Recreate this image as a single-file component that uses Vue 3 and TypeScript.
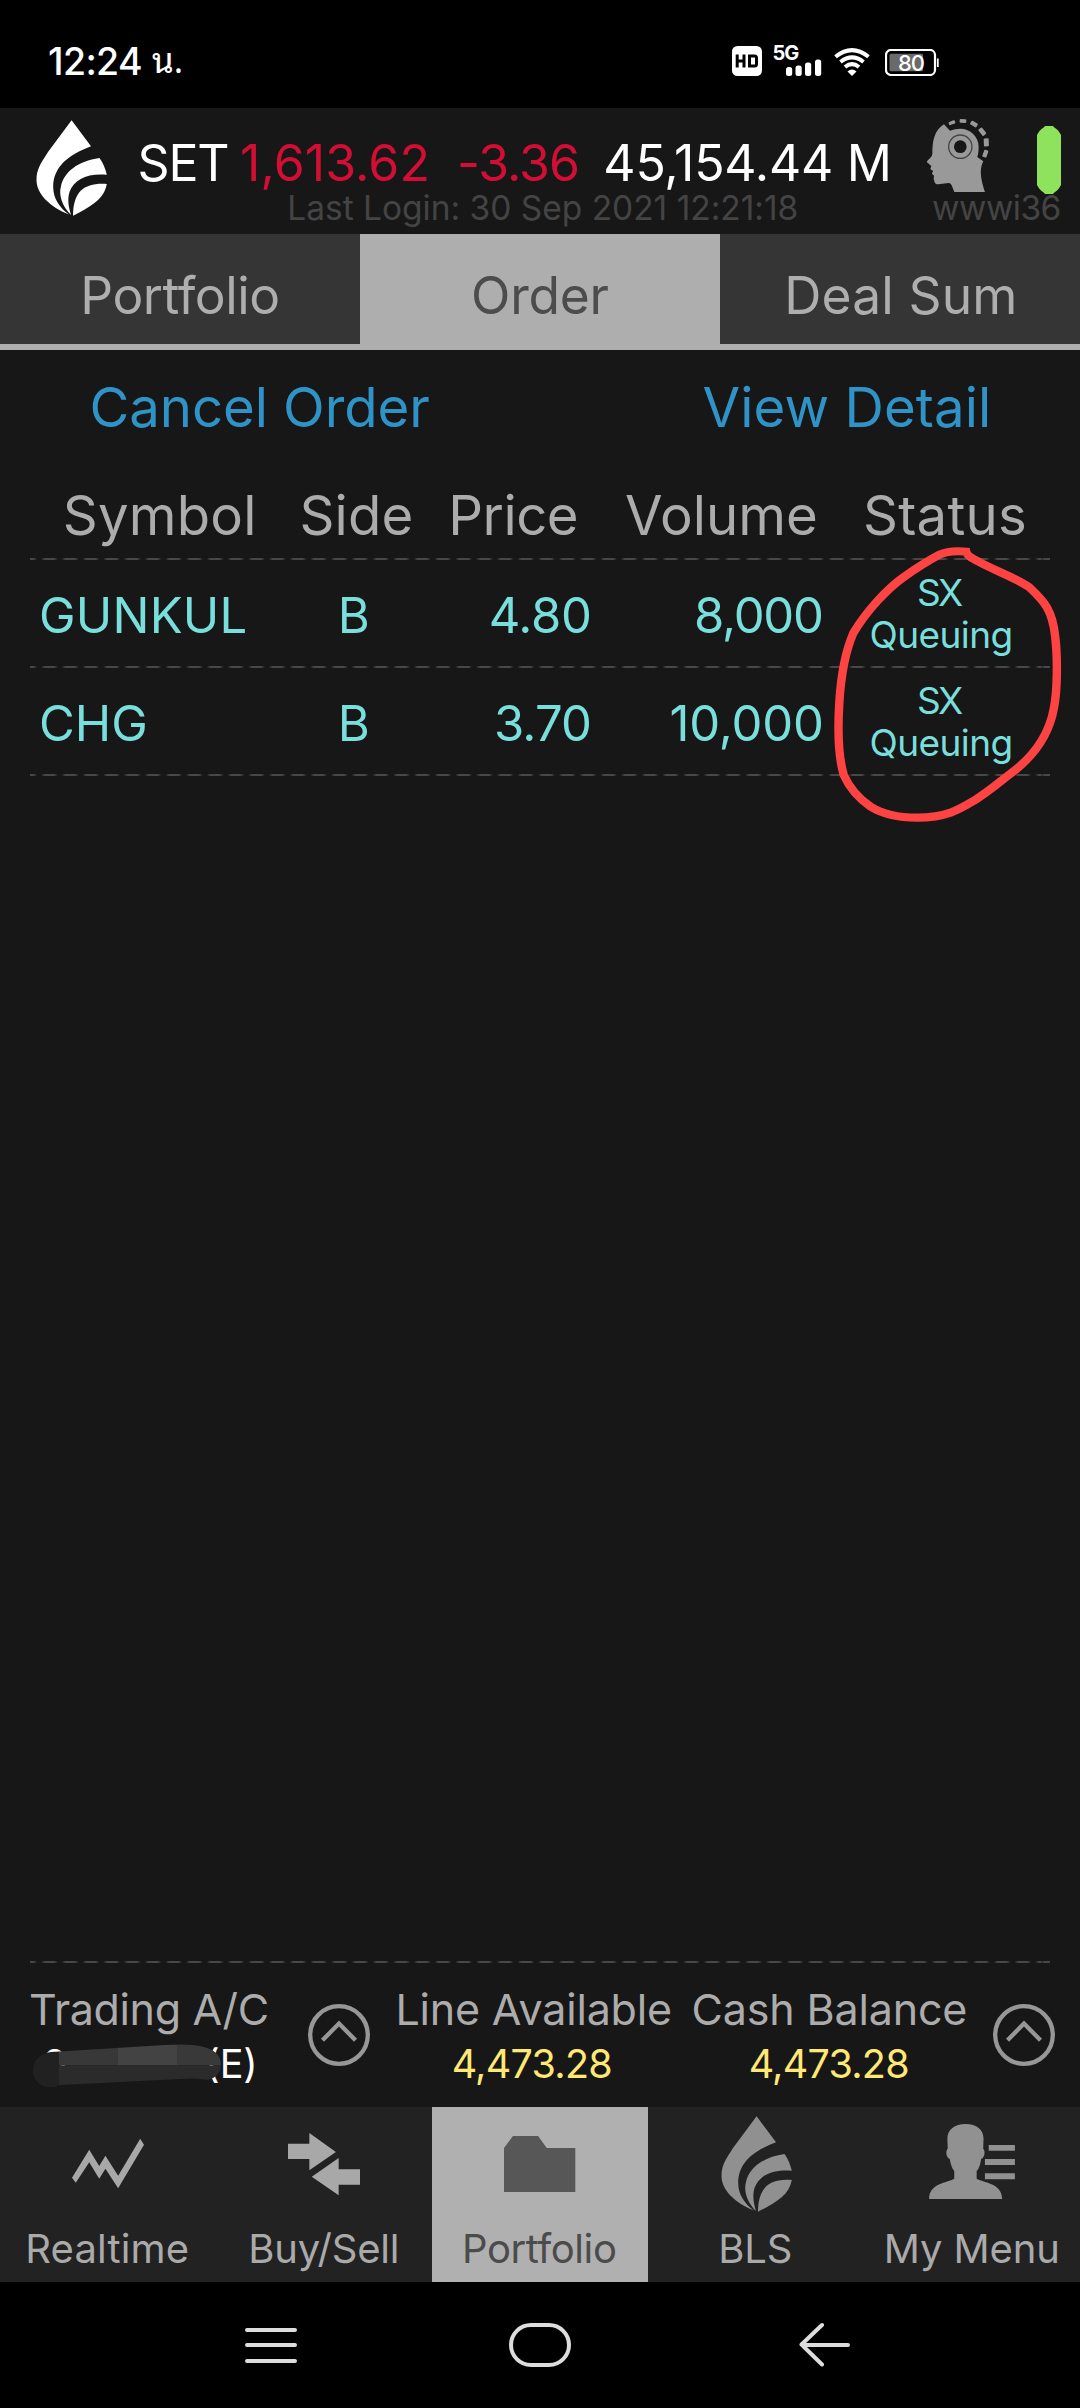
<script setup lang="ts">
import type { Directive } from 'vue'

interface Order {
  symbol: string
  symbolWidth: number
  side: string
  price: string
  priceWidth: number
  volume: string
  volumeWidth: number
}

const orders: Order[] = [
  { symbol: 'GUNKUL', symbolWidth: 204.5, side: 'B', price: '4.80', priceWidth: 98.3, volume: '8,000', volumeWidth: 125 },
  { symbol: 'CHG', symbolWidth: 104.3, side: 'B', price: '3.70', priceWidth: 93, volume: '10,000', volumeWidth: 149.5 },
]

// Tracks a label so that its visible glyphs span exactly the given width.
const vSpan: Directive<HTMLElement, number> = {
  mounted(el, { value }) {
    const text = (el.textContent ?? '').trim()
    const ctx = document.createElement('canvas').getContext('2d')
    if (!ctx) return
    const cs = getComputedStyle(el)
    ctx.font = `${cs.fontWeight} ${cs.fontSize} ${cs.fontFamily}`
    const m = ctx.measureText(text)
    const natural = m.actualBoundingBoxLeft + m.actualBoundingBoxRight
    const gaps = Math.max(text.length - 1, 1)
    const spacing = text.length > 1 ? (value - natural) / gaps : 0
    el.style.width = `${value}px`
    el.style.textIndent = `${m.actualBoundingBoxLeft}px`
    el.style.letterSpacing = `${spacing.toFixed(3)}px`
  },
}
</script>

<template>
  <div class="screen">
    <div class="status">
      <div class="clock"><span v-span="92" class="t">12:24</span><span class="thai">น.</span></div>
      <div class="tray">
        <svg class="hd" width="30" height="30" viewBox="0 0 30 30">
          <rect width="30" height="30" rx="5.5" fill="#fff" />
          <path d="M5.2 8.5V21.500M5.200 15H12M12 8.500V21.500M17.500 10H22.500Q24.500 10 24.500 12V18Q24.500 20 22.500 20H17.500Z" fill="none" stroke="#000" stroke-width="3" />
        </svg>
        <div class="signal">
          <span class="five">5G</span>
          <svg width="48" height="30" viewBox="0 0 48 30">
            <g fill="#fff">
              <rect x="12" y="21" width="6.200" height="9" rx="2.500" />
              <rect x="21.500" y="19.500" width="6.200" height="10.500" rx="2.500" />
              <rect x="31" y="16.500" width="6.200" height="13.500" rx="2.500" />
              <rect x="41" y="13.500" width="6.200" height="16.500" rx="2.500" />
            </g>
          </svg>
        </div>
        <svg class="wifi" width="36" height="28" viewBox="0 0 36 28">
          <g fill="none" stroke="#fff" stroke-width="4">
            <path d="M1.500 8.800Q18 -4.500 34.500 8.800" />
            <path d="M6.500 14Q18 4.800 29.500 14" />
            <path d="M11 19Q18 13.200 25 19" />
          </g>
          <path d="M13.500 23.500Q18 19.500 22.500 23.500L18 28Z" fill="#fff" />
        </svg>
        <div class="battery">
          <svg width="54" height="27" viewBox="0 0 54 27">
            <rect x="1" y="1" width="49" height="25" rx="5" fill="none" stroke="#fff" stroke-width="2.200" />
            <rect x="4.500" y="4.800" width="33.500" height="17.500" rx="1.500" fill="#6a6a6a" />
            <path d="M52.800 9.500V18" stroke="#fff" stroke-width="1.800" />
          </svg>
          <span class="pct">80</span>
        </div>
      </div>
    </div>

    <header class="top">
      <svg class="drop" width="72" height="96" viewBox="0 0 72 96" fill="#fff">
        <path d="M35.600 .3L55 26.300C32 35 17.200 47 17.200 67C17.200 79 24 88 33 94.500C14 87 .5 74 .5 60C.5 49 5 43 12 32Z" />
        <path d="M63.500 38Q68.500 45 70.800 54.700C52 53 38 59 33.500 72C31 80 33 88 35 95C26 86 22.500 75 25 66C28 52 42 41 63.500 38Z" />
        <path d="M70.800 64C50 62.500 37 70 37 95.700C56 86 68 79 70.800 64Z" />
      </svg>
      <div class="quote">
        <div class="index">
          <span v-span="87.800" class="t">SET</span>
          <span v-span="184.400" class="t red a">1,613.62</span>
          <span v-span="118" class="t red b">-3.36</span>
          <span v-span="282.500" class="t c">45,154.44 M</span>
        </div>
        <span v-span="507.300" class="t login">Last Login: 30 Sep 2021 12:21:18</span>
      </div>
      <div class="user">
        <div class="usericons">
          <svg width="63.300" height="74" viewBox="80 33 190 222">
            <g fill="#999">
              <path d="M134 49L152 68C162 64 172 62 183 62C213 62 238 86 238 116C238 128 237 138 234 147L252 160C245 175 238 195 257 252H165C160 240 157 225 148 225L116 229C105 229 106 221 103 213L104 203L98 197L101 188L93 184L96 174L83 163C81 157 98 150 99 138C99 100 104 68 134 49Z" />
              <rect x="-10" y="-5" width="20" height="10" rx="3" transform="translate(158 44) rotate(-20)" />
              <rect x="-10" y="-5.500" width="20" height="11" rx="3" transform="translate(191 39) rotate(4)" />
              <rect x="-11" y="-6.500" width="22" height="13" rx="3" transform="translate(224 48) rotate(30)" />
              <rect x="-12" y="-7" width="24" height="14" rx="3" transform="translate(249 71) rotate(52)" />
              <rect x="-12" y="-7.500" width="24" height="15" rx="3" transform="translate(261 103) rotate(88)" />
              <rect x="-11" y="-6.500" width="22" height="13" rx="3" transform="translate(258 137) rotate(110)" />
            </g>
            <circle cx="183" cy="116" r="35" fill="none" stroke="#444" stroke-width="4" />
            <circle cx="183" cy="116" r="19" fill="#171717" />
          </svg>
          <svg class="pill" width="24" height="68" viewBox="0 0 24 68"><path d="M8 0H16L24 9V59L16 68H8L0 59V9Z" fill="#8ee25c" /><rect y="1" width="24" height="66" rx="11" fill="#8ee25c" /></svg>
        </div>
        <span v-span="126.500" class="t login">wwwi36</span>
      </div>
    </header>

    <nav class="tabs">
      <div class="tab"><span v-span="194" class="t">Portfolio</span></div>
      <div class="tab on"><span v-span="134.300" class="t">Order</span></div>
      <div class="tab"><span v-span="226" class="t">Deal Sum</span></div>
    </nav>

    <div class="actions">
      <span v-span="336.700" class="t">Cancel Order</span>
      <span v-span="283.400" class="t">View Detail</span>
    </div>

    <main class="table">
      <div class="row head">
        <div class="cell"><span v-span="186.300" class="t">Symbol</span></div>
        <div class="cell"><span v-span="109.200" class="t">Side</span></div>
        <div class="cell"><span v-span="124.600" class="t">Price</span></div>
        <div class="cell"><span v-span="190" class="t">Volume</span></div>
        <div class="cell"><span v-span="159.100" class="t">Status</span></div>
      </div>
      <div class="dash" />
      <template v-for="o in orders" :key="o.symbol">
        <div class="row">
          <div class="cell sym"><span v-span="o.symbolWidth" class="t">{{ o.symbol }}</span></div>
          <div class="cell side"><span v-span="27.600" class="t">{{ o.side }}</span></div>
          <div class="cell price"><span v-span="o.priceWidth" class="t">{{ o.price }}</span></div>
          <div class="cell vol"><span v-span="o.volumeWidth" class="t">{{ o.volume }}</span></div>
          <div class="cell state">
            <span v-span="43.800" class="t">SX</span>
            <span v-span="139" class="t">Queuing</span>
          </div>
        </div>
        <div class="dash" />
      </template>
    </main>

    <svg class="mark" width="540" height="380" viewBox="0 0 1568 1140" preserveAspectRatio="none">
      <path d="M1247 276C1215 272 1180 274 1160 284C1120 306 1085 330 1055 352C1010 385 950 450 910 519C884 580 873 660 869 730C865 800 866 890 882 945C899 985 925 1015 960 1040C1000 1066 1045 1073 1095 1073C1180 1072 1215 1050 1260 1022C1300 997 1335 965 1380 930C1440 880 1480 815 1492 745C1503 690 1503 590 1496 530C1488 450 1465 425 1422 383C1390 357 1320 332 1270 303C1250 292 1236 285 1236 268" fill="none" stroke="#fe4343" stroke-width="24.500" stroke-linejoin="round" />
    </svg>

    <section class="account">
      <div class="dash" />
      <div class="accrow">
        <div class="acc one">
          <span v-span="236.700" class="t lab">Trading A/C</span>
          <div class="masked">
            <span v-span="20" class="t val">0</span>
            <span v-span="45" class="t val">(E)</span>
            <svg class="smear" width="188" height="44" viewBox="33 2043.500 188 44">
              <defs>
                <clipPath id="smear"><path d="M51 2051.500L165 2044.500Q190 2043 200 2045.500C214 2048 221 2055 221 2064C221 2075 212 2080 204 2079Q196 2077.500 180 2078.500L60 2084.500Q55 2087 49 2087C39 2086 33 2079 33 2070C33 2060 40 2052.500 51 2051.500Z" /></clipPath>
              </defs>
              <g clip-path="url(#smear)">
                <rect x="33" y="2043" width="26" height="45" fill="#212121" />
                <rect x="59" y="2043" width="59" height="22" fill="#383838" />
                <rect x="118" y="2043" width="59" height="22" fill="#434343" />
                <rect x="177" y="2043" width="45" height="22" fill="#393939" />
                <rect x="59" y="2065" width="163" height="24" fill="#2b2b2b" />
              </g>
            </svg>
          </div>
        </div>
        <svg class="up" width="62" height="62" viewBox="0 0 62 62" fill="none" stroke="#979797"><circle cx="31" cy="31" r="28.800" stroke-width="4.300" /><path d="M14.500 36.300L31 19.500L47.500 36.300" stroke-width="4.300" /></svg>
        <div class="acc two">
          <span v-span="271.500" class="t lab">Line Available</span>
          <span v-span="157.700" class="t val yel">4,473.28</span>
        </div>
        <div class="acc three">
          <span v-span="271.700" class="t lab">Cash Balance</span>
          <span v-span="157.500" class="t val yel">4,473.28</span>
        </div>
        <svg class="up last" width="62" height="62" viewBox="0 0 62 62" fill="none" stroke="#979797"><circle cx="31" cy="31" r="28.800" stroke-width="4.300" /><path d="M14.500 36.300L31 19.500L47.500 36.300" stroke-width="4.300" /></svg>
      </div>
    </section>

    <nav class="bottom">
      <div class="item">
        <div class="ico"><svg width="216" height="112" viewBox="0 0 627 336" preserveAspectRatio="none"><path fill="#a8a8a8" d="M209 212L259 128L288 177L306 146L343 206L407 95L418 113L343 244L306 185L288 215L259 166L220 227Z" /></svg></div>
        <span v-span="159.400" class="t">Realtime</span>
      </div>
      <div class="item">
        <div class="ico"><svg width="216" height="112" viewBox="627 0 627 336" preserveAspectRatio="none"><path fill="#a8a8a8" d="M836 110H898V78L975 135L898 190V156H836ZM1045 187H983V153L905 209L983 265V233H1045Z" /></svg></div>
        <span v-span="145.300" class="t">Buy/Sell</span>
      </div>
      <div class="item on">
        <div class="ico"><svg width="216" height="112" viewBox="1254 0 627 336" preserveAspectRatio="none"><path fill="#575757" d="M1463 123L1489 87H1562L1587 123H1670V255H1463Z" /></svg></div>
        <span v-span="149.800" class="t">Portfolio</span>
      </div>
      <div class="item">
        <div class="ico">
          <svg class="bls" width="72" height="96" viewBox="0 0 72 96" fill="#909090">
            <path d="M35.600 .3L55 26.300C32 35 17.200 47 17.200 67C17.200 79 24 88 33 94.500C14 87 .5 74 .5 60C.5 49 5 43 12 32Z" />
            <path d="M63.500 38Q68.500 45 70.800 54.700C52 53 38 59 33.500 72C31 80 33 88 35 95C26 86 22.500 75 25 66C28 52 42 41 63.500 38Z" />
            <path d="M70.800 64C50 62.500 37 70 37 95.700C56 86 68 79 70.800 64Z" />
          </svg>
        </div>
        <span v-span="69.600" class="t">BLS</span>
      </div>
      <div class="item">
        <div class="ico"><svg width="216" height="112" viewBox="941 0 627 336" preserveAspectRatio="none"><path fill="#919191" d="M1236 51C1268 51 1288 68 1288 95L1287 125C1293 130 1293 150 1281 156C1279 172 1275 185 1268 192V215C1290 228 1342 228 1342 276H1130C1130 228 1182 228 1203 215V192C1197 185 1192 172 1190 156C1178 150 1178 130 1184 125L1183 95C1183 68 1204 51 1236 51ZM1303 114H1379V131H1303ZM1292 156H1379V174H1292ZM1292 199H1379V217H1292Z" /></svg></div>
        <span v-span="170.500" class="t">My Menu</span>
      </div>
    </nav>

    <div class="sys">
      <svg width="54" height="46" viewBox="0 0 54 46" fill="none" stroke="#ddd" stroke-width="4" stroke-linecap="round"><path d="M3 8H51M3 23H51M3 39H51" /></svg>
      <svg class="home" width="62" height="46" viewBox="0 0 62 46" fill="none" stroke="#ddd" stroke-width="4"><rect x="2" y="3" width="58" height="40" rx="20" /></svg>
      <svg width="52" height="46" viewBox="0 0 52 46" fill="none" stroke="#ddd" stroke-width="4" stroke-linecap="round" stroke-linejoin="round"><path d="M49 23H3M23 3L2.500 22.500L23 42.500" /></svg>
    </div>
  </div>
</template>

<style>
body {
  background: #000;
}
</style>

<style scoped>
.screen {
  position: relative;
  display: flex;
  flex-direction: column;
  width: 1080px;
  height: 2408px;
  overflow: hidden;
  background: #171717;
  font-family: Inter, "Noto Sans", sans-serif;
  color: #fff;
}
.screen svg {
  display: block;
  flex: none;
}
.t {
  display: block;
  flex: none;
  white-space: nowrap;
}
.status {
  display: flex;
  justify-content: space-between;
  height: 108px;
  background: #000;
}
.clock {
  display: flex;
  padding: 41.500px 0 0 49px;
  font-size: 37.500px;
  line-height: 40px;
  font-weight: 450;
}
.thai {
  margin: -4.500px 0 0 11px;
  font-family: "Noto Sans Thai Looped", "Noto Looped Thai", Loma, Garuda, Waree, FreeSerif, sans-serif;
  font-size: 35px;
  font-weight: 400;
}
.tray {
  display: flex;
  align-items: flex-start;
  width: 348.500px;
  padding-top: 46px;
}
.signal {
  position: relative;
  margin-left: 12px;
}
.five {
  position: absolute;
  left: -1px;
  top: -1px;
  font-size: 20px;
  line-height: 17px;
  font-weight: 700;
  letter-spacing: -1px;
}
.wifi {
  margin: 2px 0 0 12px;
}
.battery {
  position: relative;
  margin: 3px 0 0 15px;
}
.pct {
  position: absolute;
  left: 1px;
  top: 0;
  width: 51px;
  text-align: center;
  font-size: 22px;
  line-height: 28px;
  font-weight: 500;
  letter-spacing: -1px;
}
.top {
  display: flex;
  height: 126px;
}
.drop {
  margin: 12px 0 0 36px;
}
.quote {
  width: 759px;
  padding: 25px 0 0 31.500px;
  box-sizing: content-box;
}
.index {
  display: flex;
  height: 60px;
  font-size: 50px;
  line-height: 60px;
}
.red {
  color: #d30e34;
}
.a {
  margin-left: 14.700px;
}
.b {
  margin-left: 33.600px;
}
.c {
  margin-left: 27.400px;
}
.login {
  font-size: 33.500px;
  line-height: 40px;
  color: #444;
}
.quote .login {
  margin: -5px 0 0 149.800px;
}
.user {
  width: 180px;
  padding-top: 11px;
}
.usericons {
  display: flex;
  margin-left: 27.500px;
  height: 74px;
}
.pill {
  margin: 7px 0 0 47.700px;
}
.user .login {
  margin: -5px 0 0 34.600px;
}
.tabs {
  display: flex;
  height: 110px;
  background: #353535;
  border-bottom: 6px solid #aeaeae;
  font-size: 51.500px;
  color: #aeaeae;
}
.tab {
  display: flex;
  flex: 1;
  justify-content: center;
  align-items: center;
  padding: 11.500px 0 0 2.500px;
}
.tab.on {
  background: #aeaeae;
  color: #4c4c4c;
}
.actions {
  display: flex;
  justify-content: space-between;
  align-items: center;
  height: 114px;
  padding: 0 93px 0 92.500px;
  font-size: 54.500px;
  color: #2f93c7;
}
.row {
  display: grid;
  grid-template-columns: 258px 138px 177px 236px 213px;
  height: 106px;
  margin-left: 30px;
  padding-top: 4px;
  box-sizing: border-box;
  font-size: 49px;
  color: #78dfdc;
}
.row.head {
  height: 94px;
  padding-top: 8px;
  font-size: 54.500px;
  color: #acacac;
}
.cell {
  display: flex;
  justify-content: center;
  align-items: center;
}
.sym {
  justify-content: flex-start;
  padding-left: 11px;
}
.side {
  padding-right: 3px;
}
.price {
  justify-content: flex-end;
  padding-right: 14px;
}
.vol {
  justify-content: flex-end;
  padding-right: 18px;
}
.state {
  flex-direction: column;
  padding: 0 9px 2px 0;
  font-size: 37px;
  line-height: 42.500px;
}
.dash {
  height: 2px;
  margin: 0 30px;
  background: repeating-linear-gradient(90deg, #262626 0, #484848 3px, #484848 12px, #262626 15px, #171717 15.500px, #171717 20.200px, #262626 20.710px) -8.700px 0;
}
.mark {
  position: absolute;
  left: 540px;
  top: 460px;
}
.account {
  height: 146px;
  margin-top: auto;
}
.accrow {
  display: flex;
}
.acc {
  display: flex;
  flex-direction: column;
  align-items: center;
  padding-top: 21px;
}
.lab {
  font-size: 43px;
  line-height: 50px;
  color: #acacac;
}
.val {
  margin-top: 5.500px;
  font-size: 39.500px;
  line-height: 48px;
}
.yel {
  color: #ffe873;
}
.one {
  margin-left: 31px;
}
.masked {
  position: relative;
  display: flex;
  justify-content: space-between;
  width: 210px;
}
.smear {
  position: absolute;
  left: -11.500px;
  top: 9.500px;
}
.up {
  margin: 41px 0 0 40.300px;
}
.two {
  margin-left: 28.500px;
}
.three {
  margin-left: 23.600px;
}
.two .yel {
  margin-right: 3.500px;
}
.last {
  margin-left: 27.700px;
}
.bottom {
  display: flex;
  height: 175px;
  background: #222;
  font-size: 40px;
  line-height: 60px;
  color: #aaa;
}
.item {
  display: flex;
  flex: 1;
  flex-direction: column;
  align-items: center;
}
.item.on {
  background: #b0b0b0;
  color: #4b4b4b;
}
.ico {
  height: 112px;
}
.bls {
  margin: 9px 0 0 2px;
}
.sys {
  display: flex;
  justify-content: space-between;
  align-items: center;
  height: 126px;
  padding: 0 229px 0 243.500px;
  background: #000;
}
.home {
  margin-right: 17px;
}
</style>
